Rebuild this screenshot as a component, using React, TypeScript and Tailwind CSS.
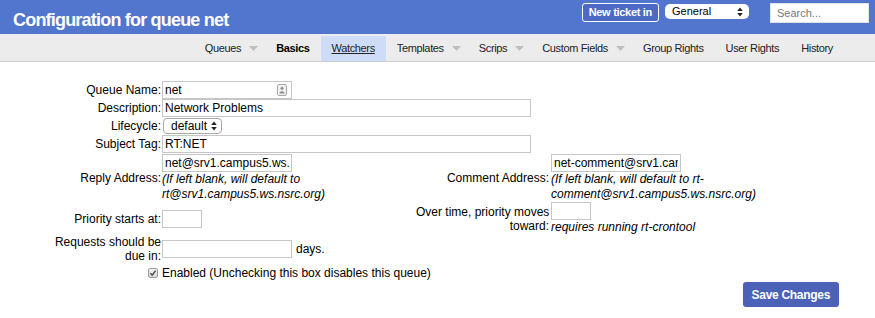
import React from "react";

const navItems = [
  { label: "Queues", menu: true },
  { label: "Basics", bold: true },
  { label: "Watchers", active: true },
  { label: "Templates", menu: true },
  { label: "Scrips", menu: true },
  { label: "Custom Fields", menu: true },
  { label: "Group Rights" },
  { label: "User Rights" },
  { label: "History" },
];

function MenuTriangle() {
  return (
    <svg width="9" height="5" viewBox="0 0 9 5" className="ml-[8px] mr-[7px]">
      <path d="M0 0h9L4.5 5z" fill="#bfbfbf" />
    </svg>
  );
}

function UpDown() {
  return (
    <svg width="6" height="10" viewBox="0 0 6 10">
      <path d="M3 0.5L5.8 4H0.2z M0.2 6h5.6L3 9.5z" fill="#222" />
    </svg>
  );
}

function ContactIcon() {
  return (
    <svg width="10" height="12" viewBox="0 0 10 12" className="absolute right-[4px] top-[2px]">
      <rect x="0.5" y="0.5" width="9" height="11" rx="1.5" fill="#f1f1f1" stroke="#a9a9a9" />
      <circle cx="5" cy="4.2" r="1.5" fill="#8c8c8c" />
      <path d="M2.6 8.6q2.4-2.6 4.8 0v0.8h-4.8z" fill="#8c8c8c" />
    </svg>
  );
}

function CheckBox() {
  return (
    <svg width="10" height="10" viewBox="0 0 10 10">
      <defs>
        <linearGradient id="cb" x1="0" y1="0" x2="0" y2="1">
          <stop offset="0" stopColor="#f4f4f4" />
          <stop offset="1" stopColor="#d6d6d6" />
        </linearGradient>
      </defs>
      <rect x="0.5" y="0.5" width="9" height="9" rx="1.5" fill="url(#cb)" stroke="#9d9d9d" />
      <path d="M2.4 5.2l1.8 2L7.6 2.6" fill="none" stroke="#4a4a4a" strokeWidth="1.4" />
    </svg>
  );
}

function Field({ w, value, icon }: { w: string; value?: string; icon?: boolean }) {
  return (
    <div className={`relative h-[18px] shrink-0 border border-[#c6c6c6] bg-white ${w}`}>
      <input
        defaultValue={value}
        readOnly
        className="h-full w-full bg-transparent px-[2px] text-[12px] leading-[16px] text-black outline-none"
      />
      {icon && <ContactIcon />}
    </div>
  );
}

function Header() {
  return (
    <div className="flex h-[34px] items-start bg-[#5276ce]">
      <h1 className="pl-[13px] pt-[10px] text-[18px] font-bold leading-[20px] tracking-[-0.8px] text-white">
        Configuration for queue net
      </h1>
      <div className="ml-auto flex items-start pr-[6px] pt-[3px]">
        <button className="h-[19px] rounded-[3px] border border-white bg-[#4c6ac4] px-[6px] text-[11px] font-bold leading-[17px] tracking-[-0.3px] text-white">
          New ticket in
        </button>
        <div className="ml-[6px] mt-[1px] flex h-[15px] w-[84px] items-center justify-between rounded-[5px] bg-white pl-[7px] pr-[6px] text-[11px] leading-[15px] text-black">
          <span>General</span>
          <UpDown />
        </div>
        <input
          placeholder="Search..."
          className="ml-[21px] h-[20px] w-[99px] border border-[#e2e2e2] bg-white px-[6px] text-[11px] text-black outline-none placeholder:text-[#777]"
        />
      </div>
    </div>
  );
}

function Nav() {
  return (
    <div className="flex h-[28px] justify-end border-b border-[#cccccc] bg-[#ececec] pr-[31px] pt-[2px]">
      {navItems.map((item) => (
        <div
          key={item.label}
          className={`flex items-center pl-[11px] text-[11px] tracking-[-0.35px] ${item.menu ? "" : "pr-[11px]"} ${
            item.active ? "bg-[#cfdcf7] underline" : ""
          } ${item.bold ? "font-bold text-black" : "text-[#222]"}`}
        >
          <span>{item.label}</span>
          {item.menu && <MenuTriangle />}
        </div>
      ))}
    </div>
  );
}

function Form() {
  const label = "pr-[1px] text-right";
  const label2 = "pr-[2px] text-right";
  return (
    <div className="text-[12px] leading-[14px]">
      <div className="grid grid-cols-[162px_254px_135px_1fr] items-center pt-[19px]">
        <div className={label}>Queue Name:</div>
        <div className="col-span-3">
          <Field w="w-[130px]" value="net" icon />
        </div>

        <div className={label}>Description:</div>
        <div className="col-span-3">
          <Field w="w-[369px]" value="Network Problems" />
        </div>

        <div className={label}>Lifecycle:</div>
        <div className="col-span-3 flex h-[18px] items-center pl-[1px]">
          <div className="flex h-[16px] w-[59px] items-center justify-between rounded-[4px] border border-[#a9a9a9] bg-white pl-[7px] pr-[4px]">
            <span>default</span>
            <UpDown />
          </div>
        </div>

        <div className={label}>Subject Tag:</div>
        <div className="col-span-3">
          <Field w="w-[369px]" value="RT:NET" />
        </div>

        <div className={label}>Reply Address:</div>
        <div className="pt-[1px]">
          <Field w="w-[130px]" value="net@srv1.campus5.ws.nsrc.org" />
          <div className="whitespace-nowrap italic leading-[15px]">
            (If left blank, will default to
            <br />
            rt@srv1.campus5.ws.nsrc.org)
          </div>
        </div>
        <div className={label2}>Comment Address:</div>
        <div className="pt-[1px]">
          <Field w="w-[130px]" value="net-comment@srv1.campus5.ws.nsrc.org" />
          <div className="whitespace-nowrap italic leading-[15px]">
            (If left blank, will default to rt-
            <br />
            comment@srv1.campus5.ws.nsrc.org)
          </div>
        </div>

        <div className={label}>Priority starts at:</div>
        <div>
          <Field w="w-[40px]" />
        </div>
        <div className={`${label2} whitespace-nowrap`}>
          Over time, priority moves
          <br />
          toward:
        </div>
        <div>
          <Field w="w-[40px]" />
          <div className="italic leading-[15px]">requires running rt-crontool</div>
        </div>

        <div className={`${label} whitespace-nowrap`}>
          Requests should be
          <br />
          due in:
        </div>
        <div className="col-span-3 flex items-center">
          <Field w="w-[130px]" />
          <span className="ml-[4px]">days.</span>
        </div>

        <div className="flex h-[18px] items-center justify-end pr-[4px] pt-[2px]">
          <CheckBox />
        </div>
        <div className="col-span-3 pt-[2px] leading-[16px]">Enabled (Unchecking this box disables this queue)</div>
      </div>

      <div className="mt-[1px] flex justify-end pr-[36px]">
        <button className="h-[25px] rounded-[3px] bg-[#4b62b8] px-[9px] text-[12px] font-bold tracking-[-0.3px] text-white">
          Save Changes
        </button>
      </div>
    </div>
  );
}

export default function App() {
  return (
    <div className="h-[318px] w-[875px] overflow-hidden bg-white font-['Liberation_Sans',Arial,Helvetica,sans-serif] text-black">
      <Header />
      <Nav />
      <Form />
    </div>
  );
}
